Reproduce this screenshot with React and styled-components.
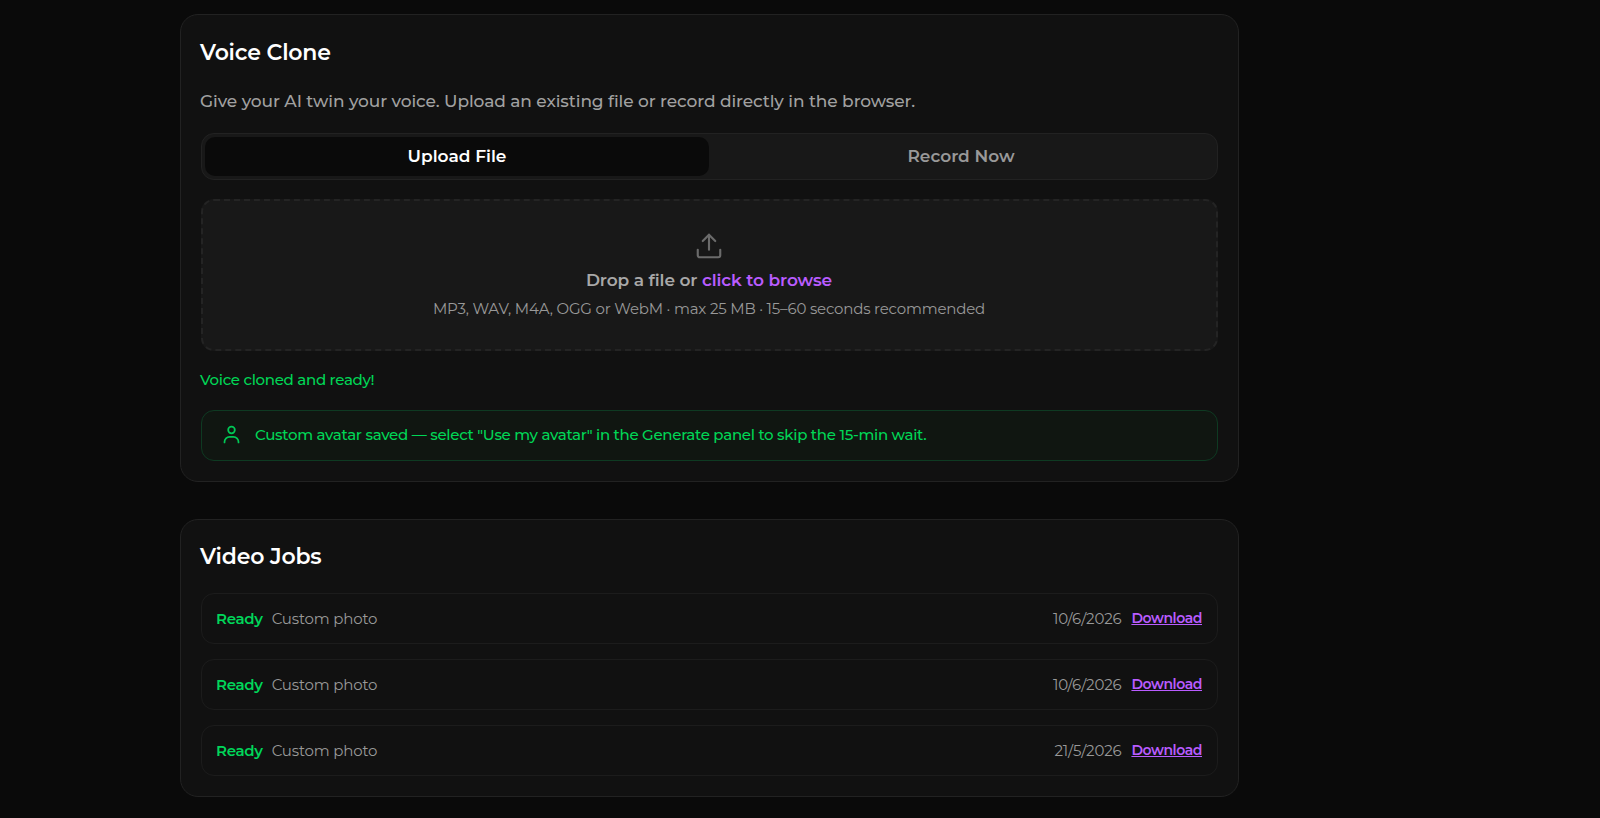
import React, { useState } from 'react';
import styled, { createGlobalStyle } from 'styled-components';

const App = () => {
  const [tab, setTab] = useState('upload');

  const jobs = [
    { id: 1, status: 'Ready', title: 'Custom photo', date: '10/6/2026' },
    { id: 2, status: 'Ready', title: 'Custom photo', date: '10/6/2026' },
    { id: 3, status: 'Ready', title: 'Custom photo', date: '21/5/2026' },
  ];

  return (
    <>
      <GlobalStyle />
      <Page>
        <VoiceCard>
          <CardTitle>Voice Clone</CardTitle>
          <Description>
            Give your AI twin your voice. Upload an existing file or record directly in the browser.
          </Description>
          <Tabs>
            <Tab $active={tab === 'upload'} onClick={() => setTab('upload')}>
              Upload File
            </Tab>
            <Tab $active={tab === 'record'} onClick={() => setTab('record')}>
              Record Now
            </Tab>
          </Tabs>
          <DropZone>
            <UploadIcon viewBox="0 0 24 24">
              <path d="M21 15v4.4a1.6 1.6 0 0 1-1.6 1.6H4.6A1.6 1.6 0 0 1 3 19.4V15" />
              <path d="M17 8l-5-5-5 5" />
              <path d="M12 3v12" />
            </UploadIcon>
            <DropText>
              Drop a file or <Browse>click to browse</Browse>
            </DropText>
            <DropHint>MP3, WAV, M4A, OGG or WebM · max 25 MB · 15–60 seconds recommended</DropHint>
          </DropZone>
          <StatusText>Voice cloned and ready!</StatusText>
          <AvatarBanner>
            <UserIcon viewBox="0 0 24 24">
              <circle cx="12" cy="6.8" r="3.8" />
              <path d="M20 21v-.5a5.8 5.8 0 0 0-5.8-5.8H9.8A5.8 5.8 0 0 0 4 20.5v.5" />
            </UserIcon>
            <BannerText>
              Custom avatar saved — select "Use my avatar" in the Generate panel to skip the 15-min wait.
            </BannerText>
          </AvatarBanner>
        </VoiceCard>

        <JobsCard>
          <CardTitle>Video Jobs</CardTitle>
          <JobList>
            {jobs.map((job) => (
              <JobRow key={job.id}>
                <JobStatus>{job.status}</JobStatus>
                <JobName>{job.title}</JobName>
                <JobDate>{job.date}</JobDate>
                <DownloadLink href="#">Download</DownloadLink>
              </JobRow>
            ))}
          </JobList>
        </JobsCard>
      </Page>
    </>
  );
};

const GlobalStyle = createGlobalStyle`
  * {
    box-sizing: border-box;
  }

  body {
    margin: 0;
    background: #0a0a0a;
    color: #fff;
    font-family: Montserrat, Inter, sans-serif;
    overflow: hidden;
  }
`;

const Page = styled.main`
  display: flex;
  flex-direction: column;
  gap: 37px;
  width: 1059px;
  height: 818px;
  margin-left: 180px;
  padding-top: 14px;
`;

const Card = styled.section`
  display: flex;
  flex-direction: column;
  flex-shrink: 0;
  padding: 20px;
  background: #111111;
  border: 1px solid #222222;
  border-radius: 18px;
`;

const VoiceCard = styled(Card)`
  height: 468px;
  padding-top: 21px;
`;

const JobsCard = styled(Card)`
  height: 278px;
`;

const CardTitle = styled.h2`
  margin: 0 0 0 -1px;
  font-size: 22px;
  font-weight: 600;
  letter-spacing: -0.2px;
  line-height: 34px;
`;

const Description = styled.p`
  margin: 18px 0 0 -1px;
  color: #a1a1a1;
  font-size: 17px;
  font-weight: 500;
  letter-spacing: -0.09px;
  line-height: 26px;
  white-space: nowrap;
`;

const Tabs = styled.div`
  display: flex;
  height: 47px;
  margin-top: 19px;
  padding: 3px 4px 3px 3px;
  background: #181818;
  border: 1px solid #222222;
  border-radius: 13px;
`;

const Tab = styled.button`
  flex: 1;
  padding: 0 0 2px;
  border: none;
  border-radius: 10px;
  background: ${({ $active }) => ($active ? '#0a0a0a' : 'transparent')};
  color: ${({ $active }) => ($active ? '#fff' : '#999')};
  font-family: inherit;
  font-size: 17px;
  font-weight: 600;
  cursor: pointer;
`;

const DropZone = styled.div`
  display: flex;
  flex-direction: column;
  align-items: center;
  height: 152px;
  margin-top: 19px;
  padding: 30px 1px 0 0;
  background: #181818;
  border: 2px dashed #242424;
  border-radius: 13px;
  cursor: pointer;
`;

const UploadIcon = styled.svg`
  width: 30px;
  height: 30px;
  fill: none;
  stroke: #6b6b6b;
  stroke-width: 1.7;
  stroke-linecap: round;
  stroke-linejoin: round;
`;

const DropText = styled.p`
  margin: 6px 0 0;
  color: #a8a8a8;
  font-size: 17px;
  font-weight: 600;
  letter-spacing: -0.1px;
  line-height: 26px;
`;

const Browse = styled.span`
  color: #b95cff;
`;

const DropHint = styled.p`
  margin: 4px 0 0;
  color: #999;
  font-size: 15px;
  letter-spacing: -0.19px;
  line-height: 24px;
`;

const StatusText = styled.p`
  margin: 17px 0 0 -1px;
  color: #00d656;
  font-size: 15px;
  font-weight: 500;
  letter-spacing: -0.29px;
  line-height: 24px;
`;

const AvatarBanner = styled.div`
  display: flex;
  align-items: center;
  height: 51px;
  margin-top: 18px;
  padding: 0 19px 2px;
  gap: 13px;
  background: #101611;
  border: 1px solid #0e3a22;
  border-radius: 13px;
`;

const UserIcon = styled.svg`
  width: 21px;
  height: 21px;
  fill: none;
  stroke: #00c956;
  stroke-width: 2;
  stroke-linecap: round;
  stroke-linejoin: round;
`;

const BannerText = styled.span`
  color: #00d656;
  font-size: 15px;
  font-weight: 500;
  letter-spacing: -0.28px;
  line-height: 23px;
  white-space: nowrap;
`;

const JobList = styled.div`
  display: flex;
  flex-direction: column;
  gap: 15px;
  margin-top: 19px;
`;

const JobRow = styled.div`
  display: flex;
  align-items: center;
  height: 51px;
  padding: 0 15px 0 14px;
  border: 1px solid #1c1c1c;
  border-radius: 13px;
  font-size: 15px;
  letter-spacing: -0.18px;
  line-height: 24px;
`;

const JobStatus = styled.span`
  color: #00d75a;
  font-weight: 600;
  letter-spacing: -0.3px;
`;

const JobName = styled.span`
  flex: 1;
  margin-left: 9px;
  color: #999;
`;

const JobDate = styled.span`
  color: #999;
`;

const DownloadLink = styled.a`
  margin-left: 10px;
  padding-bottom: 1px;
  color: #b95cff;
  font-size: 14px;
  font-weight: 600;
  letter-spacing: -0.42px;
  text-decoration: underline;
`;

export default App;
